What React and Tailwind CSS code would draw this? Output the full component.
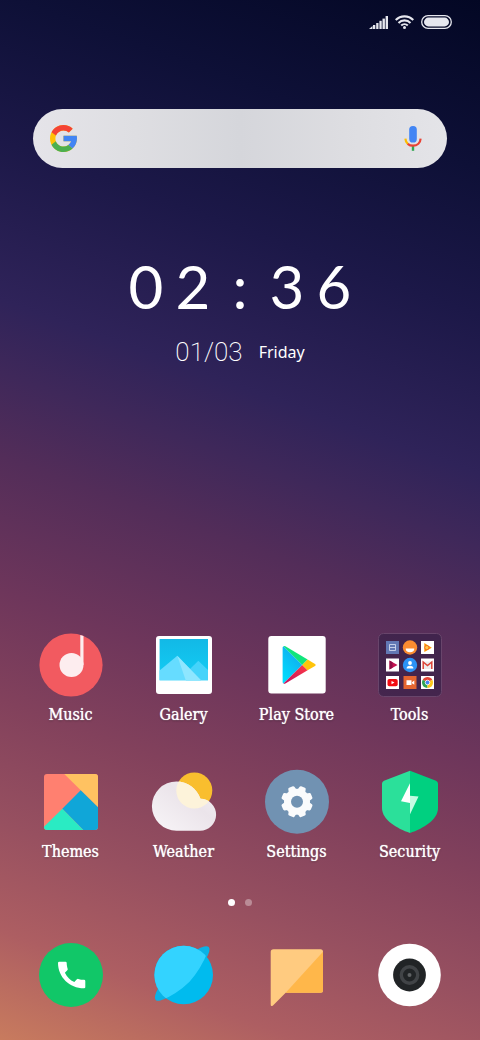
import React, { useState } from 'react'

function SignalIcon() {
  return (
    <svg viewBox="0 0 19 13" className="w-[19px] h-[13px]" fill="#e6e7ee" aria-hidden="true">
      <path d="M0 13l3.500-3v3z" />
      <rect x="4" y="9" width="2.300" height="4" />
      <rect x="7.200" y="7" width="2.300" height="6" />
      <rect x="10.400" y="4.800" width="2.300" height="8.200" />
      <rect x="13.500" y="2.600" width="2.400" height="10.400" />
      <rect x="16.600" y="0" width="2.400" height="13" />
    </svg>
  )
}

function WifiIcon() {
  return (
    <svg viewBox="0 0 19 14" className="w-[19px] h-[14px]" fill="none" stroke="#e6e7ee" strokeWidth="2.100" aria-hidden="true">
      <path d="M.7 5a12.4 12.4 0 0 1 17.6 0" />
      <path d="M3.5 7.9a8.5 8.5 0 0 1 12 0" />
      <path d="M6.2 10.6a4.7 4.7 0 0 1 6.6 0" />
      <circle cx="9.5" cy="12.4" r="1.5" fill="#e6e7ee" stroke="none" />
    </svg>
  )
}

function BatteryIcon() {
  return (
    <svg viewBox="0 0 31 14" className="w-[31px] h-[14px]" aria-hidden="true">
      <rect x=".7" y=".7" width="29.6" height="12.6" rx="6.3" fill="none" stroke="#e6e7ee" strokeWidth="1.3" />
      <rect x="3" y="2.600" width="25" height="8.800" rx="4.4" fill="#e6e7ee" />
    </svg>
  )
}

function GoogleIcon() {
  return (
    <svg viewBox="4 4 40 40" className="w-[27px] h-[27px]" aria-hidden="true">
      <path fill="#ffc107" d="M43.611 20.083H42V20H24v8h11.303c-1.649 4.657-6.08 8-11.303 8-6.627 0-12-5.373-12-12s5.373-12 12-12c3.059 0 5.842 1.154 7.961 3.039l5.657-5.657C34.046 6.053 29.268 4 24 4 12.955 4 4 12.955 4 24s8.955 20 20 20 20-8.955 20-20c0-1.341-.138-2.65-.389-3.917z" />
      <path fill="#f44336" d="M6.306 14.691l6.571 4.819C14.655 15.108 18.961 12 24 12c3.059 0 5.842 1.154 7.961 3.039l5.657-5.657C34.046 6.053 29.268 4 24 4 16.318 4 9.656 8.337 6.306 14.691z" />
      <path fill="#4caf50" d="M24 44c5.166 0 9.86-1.977 13.409-5.192l-6.19-5.238A11.91 11.91 0 0 1 24 36c-5.202 0-9.619-3.317-11.283-7.946l-6.522 5.025C9.505 39.556 16.227 44 24 44z" />
      <path fill="#4285f4" d="M43.611 20.083H42V20H24v8h11.303a12.04 12.04 0 0 1-4.087 5.571l6.193 5.237C36.971 39.205 44 34 44 24c0-1.341-.138-2.65-.389-3.917z" />
    </svg>
  )
}

function MicIcon() {
  return (
    <svg viewBox="0 0 18 25" className="w-[18px] h-[25px]" aria-hidden="true">
      <rect x="5.2" y="0" width="7.6" height="16.5" rx="3.6" fill="#4285f4" />
      <path d="M9 20v4.8" stroke="#34a853" strokeWidth="2.4" />
      <path d="M1.4 12.6c.1 2.300 1 4.200 2.600 5.500" fill="none" stroke="#fbbc05" strokeWidth="2.200" />
      <path d="M3.700 17.800c1.500 1.300 3.200 1.900 5.300 1.900 4.300 0 7.400-3 7.600-7.100" fill="none" stroke="#ea4335" strokeWidth="2.200" />
    </svg>
  )
}

function MusicIcon() {
  return (
    <>
      <circle cx="32" cy="32" r="31.6" fill="#f25a60" />
      <circle cx="32.500" cy="32" r="12" fill="#fdedef" />
      <path d="M41.300 2l3.200.9V32h-3.200z" fill="#fdedef" />
    </>
  )
}

function GalleryIcon() {
  return (
    <>
      <defs>
        <linearGradient id="sky" x1="0" y1="0" x2="0" y2="1">
          <stop offset="0" stopColor="#12b9e6" />
          <stop offset="1" stopColor="#13cdf5" />
        </linearGradient>
      </defs>
      <rect x="4" y="3" width="56" height="58" rx="3" fill="#fff" />
      <path d="M7.600 6H56v41.300H7.600z" fill="url(#sky)" />
      <path d="M34 40l12.300-12.300L56 37v10.300H34z" fill="#45d3fa" />
      <path d="M7.600 37.600l17.700-14.900L49 47.300H7.600z" fill="#66dcff" />
      <path d="M25.300 22.700L49 47.300H33.700z" fill="#8ee6ff" />
    </>
  )
}

function PlayStoreIcon() {
  return (
    <>
      <defs>
        <linearGradient id="playBlue" x1="0" y1="1" x2=".6" y2="0">
          <stop offset="0" stopColor="#00e3ff" />
          <stop offset="1" stopColor="#11a9ee" />
        </linearGradient>
        <linearGradient id="playRed" x1="1" y1="0" x2="0" y2="1">
          <stop offset="0" stopColor="#ff3a44" />
          <stop offset="1" stopColor="#c31162" />
        </linearGradient>
      </defs>
      <rect x="3.300" y="3" width="57.400" height="57.600" rx="3" fill="#fff" />
      <path d="M18.500 13.300L37.300 32 18.500 50.500q-.9-.5-.9-1.500V14.800q0-1 .9-1.500z" fill="url(#playBlue)" />
      <path d="M18.500 13.300q.8-.5 1.900 0l22.200 13.300L37.300 32z" fill="#10e57c" />
      <path d="M18.500 50.500q.8.500 1.900 0l22.200-13.200L37.300 32z" fill="url(#playRed)" />
      <path d="M42.600 26.600l7.400 4.300q1.600 1 0 2.100l-7.400 4.300L37.300 32z" fill="#ffc40a" />
    </>
  )
}

function ToolsIcon() {
  return (
    <>
      <rect x=".5" y=".5" width="63" height="63" rx="5" fill="#3a2149" fillOpacity=".75" stroke="#68456b" />
      {/* file manager, weather face, play music */}
      <rect x="8" y="8" width="13" height="13" fill="#6278b4" />
      <path d="M11.500 11.500h6v6h-6zM11.500 14.500h6" fill="none" stroke="#cfd8ee" strokeWidth=".9" />
      <circle cx="32" cy="14.500" r="7.200" fill="#fb8c30" />
      <path d="M27.700 15.500h8.600a4.300 3.800 0 0 1-8.600 0z" fill="#fff" />
      <rect x="43" y="8" width="13" height="13" fill="#fff" />
      <path d="M46.300 10l7.500 4.700-7.500 4.300z" fill="#ff9800" />
      <circle cx="48.800" cy="14.600" r="2.100" fill="#ffca45" stroke="#ee5c25" strokeWidth=".8" />
      {/* play movies, contacts, gmail */}
      <rect x="8" y="25.500" width="13" height="13" fill="#fff" />
      <path d="M11.500 27.500l8 4.600-8 4.500z" fill="#c51151" />
      <path d="M11.500 27.500l3 1.700v5.600l-3 1.800z" fill="#8e0c46" />
      <circle cx="32" cy="32" r="7.200" fill="#2c92f5" />
      <circle cx="32" cy="30" r="1.900" fill="#fff" />
      <path d="M28.600 35.500q0-2.700 3.400-2.700t3.400 2.700z" fill="#fff" />
      <rect x="43" y="25.500" width="13" height="13" fill="#fff" />
      <path d="M45 28.500h9v7.500h-9z" fill="#ececec" />
      <path d="M45.200 36v-7l4.300 3.600 4.300-3.600v7" fill="none" stroke="#dc4437" strokeWidth="1.500" />
      {/* youtube, recorder, chrome */}
      <rect x="8" y="43" width="13" height="13" fill="#fff" />
      <rect x="9.500" y="46" width="10.200" height="7.200" rx="1.800" fill="#f20c12" />
      <path d="M13.500 47.900l3 1.700-3 1.700z" fill="#fff" />
      <rect x="25.500" y="43" width="13" height="13" fill="#e56630" />
      <path d="M28.500 47.300h5v4.700h-5zM34 49.200l2.300-1.700v4.300L34 50.200z" fill="#fff" />
      <rect x="43" y="43" width="13" height="13" fill="#fff" />
      <path d="M49.500 49.500L44.740 46.750a5.500 5.500 0 0 1 9.520 0z" fill="#e64435" />
      <path d="M49.500 49.500L44.740 46.750a5.500 5.500 0 0 0 4.760 8.250z" fill="#30a552" />
      <path d="M49.500 49.500l4.760-2.750A5.500 5.500 0 0 1 49.500 55z" fill="#fcc719" />
      <circle cx="49.500" cy="49.500" r="2.300" fill="#4285f4" stroke="#fff" strokeWidth=".8" />
    </>
  )
}

function ThemesIcon() {
  return (
    <>
      <defs>
        <clipPath id="themeClip">
          <rect x="5" y="4" width="54" height="56" rx="3" />
        </clipPath>
      </defs>
      <g clipPath="url(#themeClip)">
        <path d="M5 4h54v56H5z" fill="#ff8070" />
        <path d="M25.300 4H59v33.300z" fill="#ffc261" />
        <path d="M41.700 20.200L59 37.300V60H44.300l-21-21.300z" fill="#10a6d8" />
        <path d="M23.300 38.700L44.300 60H5v-3.200z" fill="#2aebc3" />
      </g>
    </>
  )
}

function WeatherIcon() {
  const cloud = 'M24.500 11.500c11 0 20.300 7 24 17.200a16 16 0 0 1-.8 32H24.500a24.600 24.600 0 0 1 0-49.200z'
  return (
    <>
      <defs>
        <clipPath id="cloudClip">
          <path d={cloud} />
        </clipPath>
        <linearGradient id="cloudFill" x1="0" y1="1" x2="1" y2="0">
          <stop offset="0" stopColor="#f8f5f8" />
          <stop offset=".6" stopColor="#ebe4ea" />
          <stop offset="1" stopColor="#f5f2f5" />
        </linearGradient>
      </defs>
      <circle cx="42.300" cy="20.500" r="18" fill="#f9be2e" />
      <path d={cloud} fill="url(#cloudFill)" />
      <circle cx="42.300" cy="20.500" r="18" fill="#fdf3da" clipPath="url(#cloudClip)" />
    </>
  )
}

function SettingsIcon() {
  const teeth = [22.500, 67.500, 112.500, 157.500, 202.500, 247.500, 292.500, 337.500]
  return (
    <>
      <circle cx="32" cy="31.700" r="32" fill="#7192b2" />
      <g fill="#fafbfc">
        <circle cx="32" cy="31.700" r="13" />
        {teeth.map(a => (
          <path key={a} d="M27.600 21.500l1.100-4.600q.3-1 1.300-1h4q1 0 1.300 1l1.100 4.600z" transform={`rotate(${a} 32 31.700)`} />
        ))}
      </g>
      <circle cx="32" cy="31.700" r="6" fill="#7192b2" />
    </>
  )
}

function SecurityIcon() {
  return (
    <>
      <path d="M32 .7L6 10.700q-2 .8-2 3V38c0 12 15 20.500 28 25z" fill="#2be09a" />
      <path d="M32 .7l26 10q2 .8 2 3V38c0 12-15 20.500-28 25z" fill="#00d080" />
      <path d="M32 13.300l-9 18 9 1.700z" fill="#fff" />
      <path d="M32 25.700l8.500.7L32 44.300z" fill="#c5fbe3" />
    </>
  )
}

function PhoneIcon() {
  return (
    <>
      <circle cx="32" cy="32" r="32" fill="#11c768" />
      <path
        fill="#fff"
        d="M20.300 18.700H26.500Q27.700 18.700 27.700 20C27.700 22.500 28.300 24.200 28.700 26Q28.900 26.800 28.300 27.300L25.900 29.700C28 34 31 37 35.300 39.100L37.900 36.300Q38.500 35.700 39.300 35.900C41 36.500 43 36.700 45 36.700Q46.300 36.700 46.300 38V44.200Q46.300 45.300 45 45.300C30.500 45.300 19 34 19 20Q19 18.700 20.300 18.700z"
      />
    </>
  )
}

function BrowserIcon() {
  return (
    <>
      <defs>
        <clipPath id="globeClip">
          <circle cx="31.700" cy="32" r="29.300" />
        </clipPath>
      </defs>
      <ellipse cx="30.200" cy="30.500" rx="37.500" ry="9.500" fill="#0bb2e6" transform="rotate(-45 30.200 30.500)" />
      <circle cx="31.700" cy="32" r="29.300" fill="#00bbee" />
      <path d="M56 8Q49 26 37.500 38.700 25 51 8 58L0 64V0h60z" fill="#33d3ff" clipPath="url(#globeClip)" />
    </>
  )
}

function MessagesIcon() {
  return (
    <>
      <path d="M8.500 6.300H55.500Q58 6.300 58 8.800V47.200Q58 49.700 55.500 49.700H20.700L8 62.500Q5.700 64 5.700 61.500V9Q5.700 6.300 8.500 6.300z" fill="#ffcb80" />
      <path d="M58 8.800V47.200Q58 49.700 55.500 49.700H20.700z" fill="#ffb74a" />
    </>
  )
}

function CameraIcon() {
  return (
    <>
      <circle cx="31.500" cy="32" r="31.300" fill="#fff" />
      <circle cx="31.500" cy="32" r="16.400" fill="#212426" />
      <circle cx="31.500" cy="32" r="8.200" fill="none" stroke="#414447" strokeWidth="3.400" />
      <circle cx="31.500" cy="32" r="2" fill="#606365" />
    </>
  )
}

const apps = [
  { name: 'Music', Icon: MusicIcon },
  { name: 'Galery', Icon: GalleryIcon },
  { name: 'Play Store', Icon: PlayStoreIcon },
  { name: 'Tools', Icon: ToolsIcon },
  { name: 'Themes', Icon: ThemesIcon },
  { name: 'Weather', Icon: WeatherIcon },
  { name: 'Settings', Icon: SettingsIcon },
  { name: 'Security', Icon: SecurityIcon },
]

const dock = [
  { label: 'Phone', Icon: PhoneIcon },
  { label: 'Browser', Icon: BrowserIcon },
  { label: 'Messages', Icon: MessagesIcon },
  { label: 'Camera', Icon: CameraIcon },
]

function AppButton({ name, label, Icon }) {
  return (
    <button type="button" aria-label={label} className="flex flex-col items-center cursor-pointer">
      <svg viewBox="0 0 64 64" className="w-16 h-16 overflow-visible" aria-hidden="true">
        <Icon />
      </svg>
      {name && (
        <span className="mt-1.5 text-[16px] leading-6 whitespace-nowrap text-white font-['DejaVu_Serif_Condensed','DejaVu_Serif',serif] [text-shadow:0_0_1px_#fff,0_1px_2px_rgba(0,0,0,0.35)]">
          {name}
        </span>
      )}
    </button>
  )
}

export default function App() {
  const [query, setQuery] = useState('')
  const [page, setPage] = useState(0)

  return (
    <div className="min-h-screen flex flex-col text-white antialiased bg-[linear-gradient(200deg,#030724_0%,#0e1037_14%,#1c1848_26%,#2f2359_39%,#3f285a_45%,#532d59_52%,#6e365b_63%,#82415c_72%,#975060_82%,#ad5e62_91%,#c87b5e_100%)]">
      <header className="flex justify-end items-center gap-[7px] pt-[15px] pr-7">
        <SignalIcon />
        <WifiIcon />
        <BatteryIcon />
      </header>

      <form
        onSubmit={e => e.preventDefault()}
        className="mt-20 mx-[33px] h-[59px] pl-[17px] pr-[25px] flex items-center rounded-full bg-[linear-gradient(90deg,#e5e4e9_0%,#dedee2_25%,#d5d6db_50%,#dddde1_75%,#e4e4e8_100%)]"
      >
        <GoogleIcon />
        <input
          type="text"
          aria-label="Search"
          value={query}
          onChange={e => setQuery(e.target.value)}
          className="flex-1 min-w-0 h-full px-4 bg-transparent outline-none text-lg text-gray-800 font-['Open_Sans',sans-serif]"
        />
        <button type="button" aria-label="Voice search">
          <MicIcon />
        </button>
      </form>

      {/* Clock */}
      <div className="mt-[88px] flex justify-center text-[60px] leading-[60px] font-normal font-['Lato',sans-serif]">
        {'02:36'.split('').map((ch, i) => (
          <span key={i} className="w-[47px] text-center">{ch}</span>
        ))}
      </div>
      <div className="mt-5 flex justify-center items-center gap-4 leading-8">
        <span className="text-[26px] font-extralight font-['Roboto',sans-serif]">01/03</span>
        <span className="text-[16px] font-['Noto_Sans',sans-serif]">Friday</span>
      </div>

      {/* Apps */}
      <main className="mt-auto px-3.5 grid grid-cols-4 gap-y-[43px]">
        {apps.map(app => (
          <AppButton key={app.name} {...app} />
        ))}
      </main>

      <div className="mt-[35px] flex justify-center gap-[10px]">
        {[0, 1].map(p => (
          <button
            key={p}
            type="button"
            aria-label={`Page ${p + 1}`}
            onClick={() => setPage(p)}
            className={`w-[7px] h-[7px] rounded-full ${page === p ? 'bg-white' : 'bg-white/35'}`}
          />
        ))}
      </div>

      <nav className="mt-[37px] px-3.5 pb-[33px] grid grid-cols-4">
        {dock.map(item => (
          <AppButton key={item.label} {...item} />
        ))}
      </nav>
    </div>
  )
}
